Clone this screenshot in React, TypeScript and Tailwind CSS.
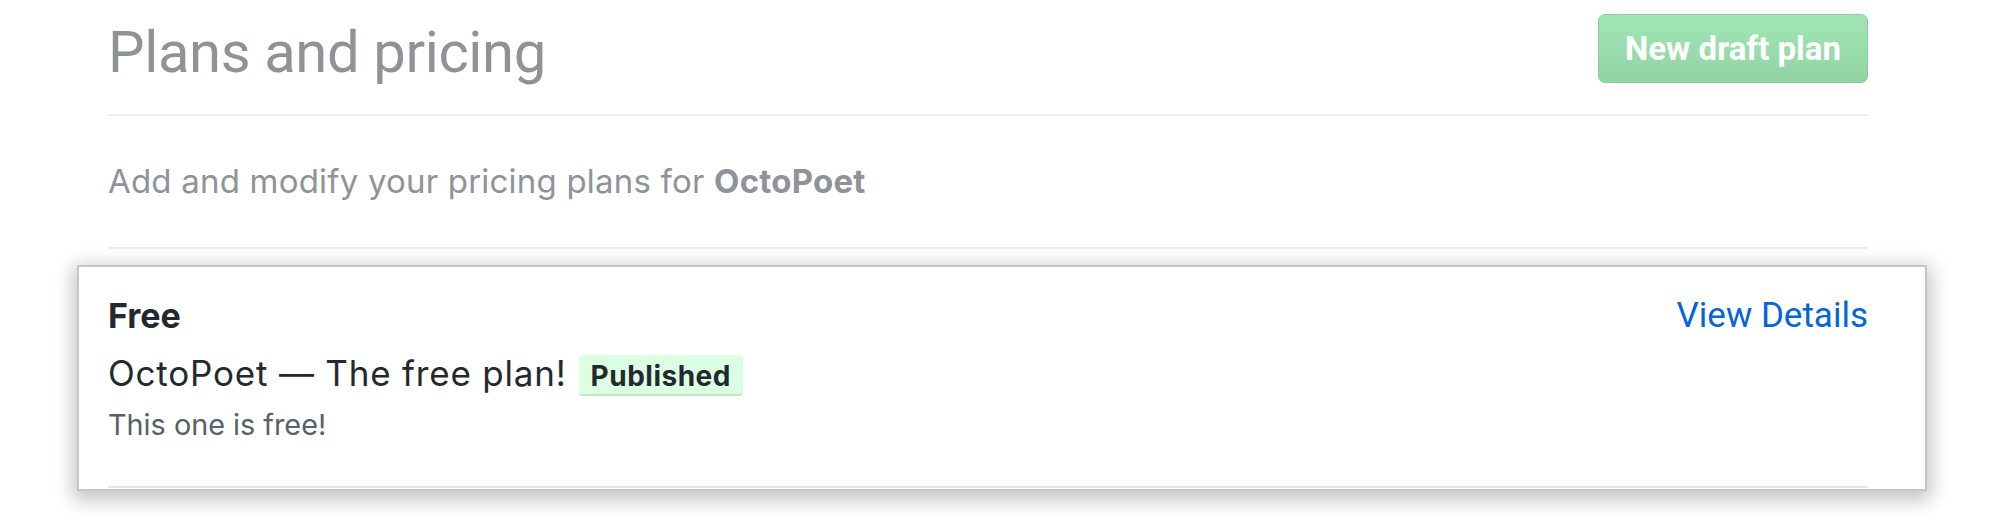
export default function App() {
  return (
    <div className="w-[2010px] h-[530px] bg-white overflow-hidden font-['Inter',sans-serif]">
      <div className="ml-[108px] w-[1760px]">
        <div className="flex items-start justify-between border-b-2 border-[#eeeeee] pt-[14px] pb-[31px]">
          <h1 className="mt-[10px] font-['Roboto',sans-serif] text-[58px] leading-[57px] tracking-[-0.4px] font-normal text-[#8f9397]">
            Plans and pricing
          </h1>
          <button className="h-[69px] w-[270px] rounded-[7px] border border-[#8ccb9b] bg-gradient-to-b from-[#a1e6b6] to-[#93d3a3] font-['Roboto',sans-serif] text-[33px] font-bold text-white">
            New draft plan
          </button>
        </div>
        <div className="border-b-2 border-[#eeeeee] pt-[45px] pb-[46px]">
          <p className="text-[33px] leading-[40px] tracking-[0.2px] text-[#8f9397]">
            Add and modify your pricing plans for <span className="font-bold">OctoPoet</span>
          </p>
        </div>
        <div className="-ml-[31px] mt-[16px] w-[1850px] border-2 border-[#c6c6c6] bg-white pl-[29px] pr-[57px] pb-[1px] shadow-[0_5px_18px_4px_rgba(0,0,0,0.24)]">
          <div className="flex items-start justify-between border-b-2 border-[#e1e4e8] pt-[29px] pb-[43px]">
            <div className="flex flex-col">
              <div className="text-[34px] leading-[40px] font-bold text-[#24292e]">Free</div>
              <div className="mt-[13px] flex items-baseline gap-[12px] text-[35px] leading-[48px] text-[#24292e]">
                <span className="tracking-[0.8px]">OctoPoet — The free plan!</span>
                <span className="rounded-[4px] border-b-2 border-[#c2e6cb] bg-[#dcffe4] px-[12px] pt-[4px] pb-[1px] text-[28px] leading-[34px] font-bold tracking-[0.5px] text-[#24292e]">
                  Published
                </span>
              </div>
              <div className="mt-[10px] text-[28.8px] leading-[36px] text-[#586069]">This one is free!</div>
            </div>
            <a className="font-['Roboto',sans-serif] text-[35px] leading-[40px] text-[#0366d6]" href="#">
              View Details
            </a>
          </div>
        </div>
      </div>
    </div>
  );
}
